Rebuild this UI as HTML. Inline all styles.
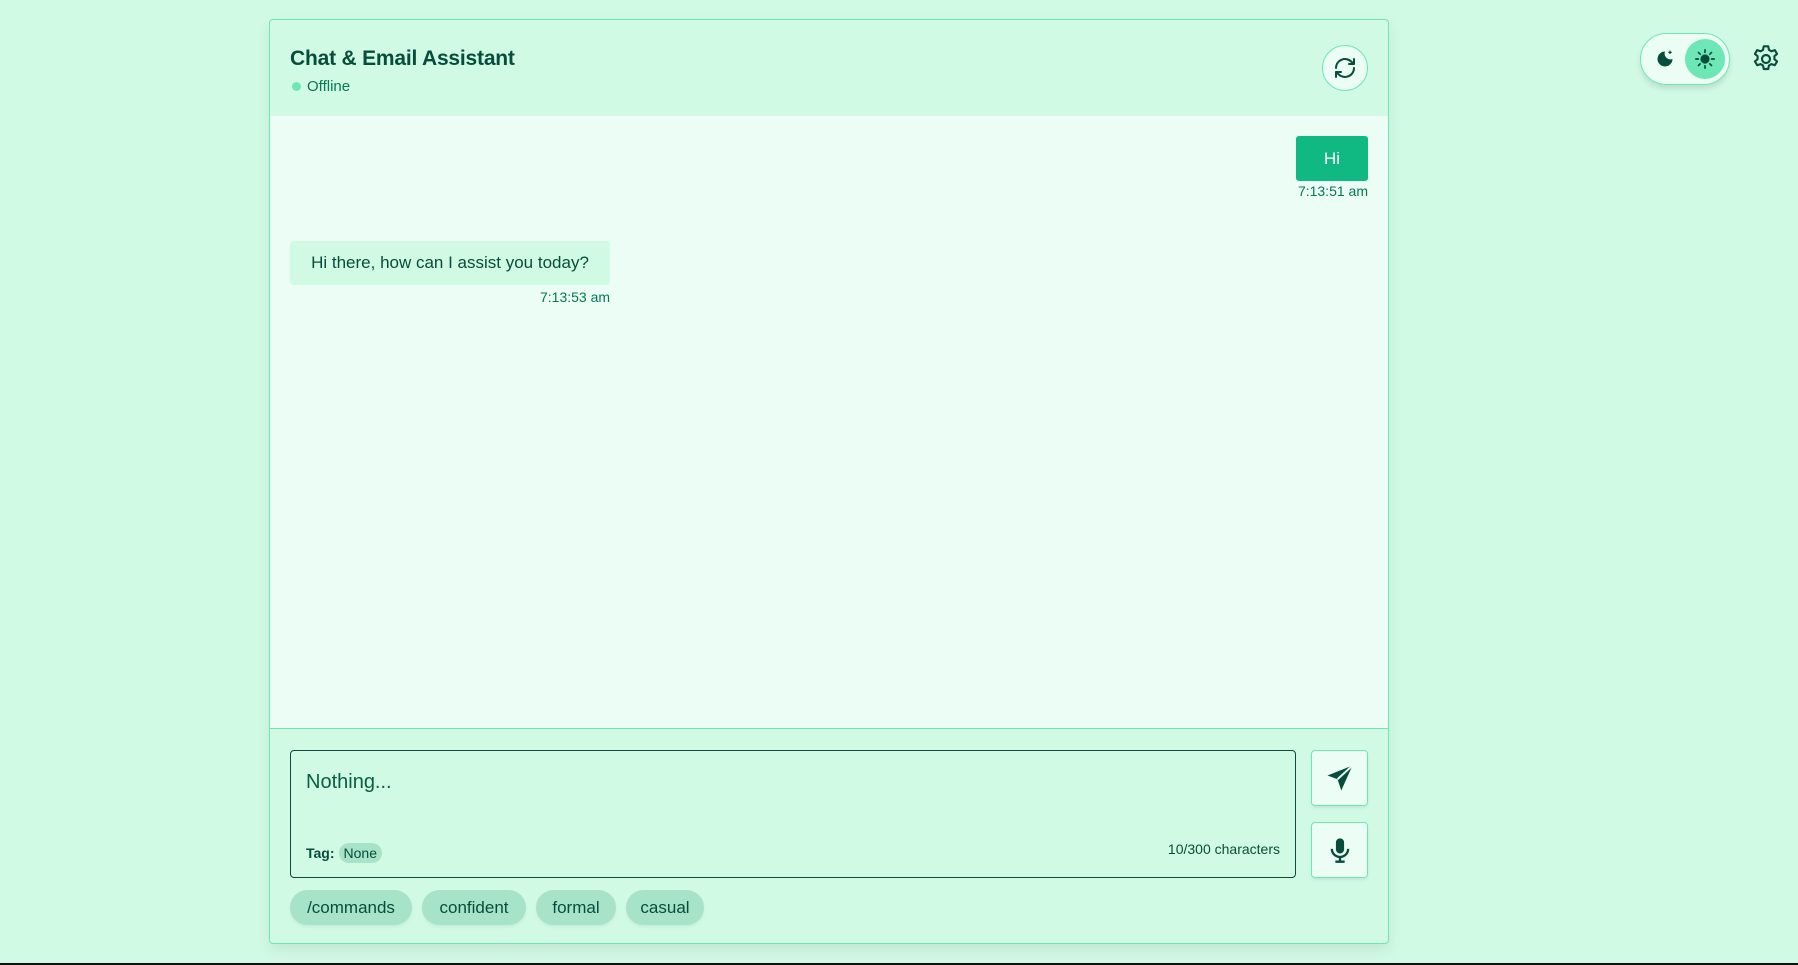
<!DOCTYPE html>
<html><head><meta charset="utf-8"><style>
*{box-sizing:border-box;margin:0;padding:0}
body{width:1798px;height:965px;background:#d1fae5;font-family:"Liberation Sans",sans-serif;color:#064e3b;position:relative;overflow:hidden}
.card{position:absolute;left:269px;top:19px;width:1120px;height:925px;border:1px solid #6ee7b7;border-radius:4px;background:#d1fae5;box-shadow:0 6px 14px rgba(0,0,0,.08);overflow:hidden}
.hdr{height:96px;position:relative}
.title{position:absolute;left:20px;top:27px;font-size:21px;font-weight:bold;color:#064e3b;letter-spacing:-0.2px}
.status{position:absolute;left:22px;top:58px;font-size:15px;color:#047857}
.status i{display:inline-block;width:9px;height:9px;border-radius:50%;background:#6ee7b7;margin-right:6px}
.refresh{position:absolute;left:1052px;top:25px;width:46px;height:46px;border-radius:50%;border:1px solid #6ee7b7;background:#ecfdf5;display:flex;align-items:center;justify-content:center}
.msgs{position:absolute;top:96px;left:0;right:0;height:613px;background:#ecfdf5;border-bottom:1px solid #6ee7b7}
.hi{position:absolute;right:20px;top:20px;width:72px;height:45px;background:#10b981;color:#fff;font-size:17px;border-radius:3px;display:flex;align-items:center;justify-content:center}
.t1{position:absolute;right:20px;top:67px;font-size:14px;color:#047857}
.bot{position:absolute;left:20px;top:125px;width:320px;height:44px;background:#d1fae5;border-radius:4px;font-size:17px;display:flex;align-items:center;justify-content:center}
.t2{position:absolute;left:270px;top:173px;font-size:14px;color:#047857}
.ta{position:absolute;left:20px;top:730px;width:1006px;height:128px;border:1.5px solid #064e3b;border-radius:4px}
.ph{position:absolute;left:15px;top:20px;font-size:20px;color:#065f46}
.tag{position:absolute;left:15px;top:94px;font-size:14px}
.tag b{margin-right:4px}
.tag span{background:#a7e3c9;border-radius:10px;padding:2px 5px}
.cnt{position:absolute;right:15px;top:90px;font-size:14px}
.btn{position:absolute;left:1041px;width:57px;height:56px;border:1px solid #6ee7b7;border-radius:4px;background:#ecfdf5;display:flex;align-items:center;justify-content:center;box-shadow:0 2px 3px rgba(0,0,0,.08)}
.chip{position:absolute;top:870px;height:35px;border-radius:18px;background:#a7e3c9;font-size:17px;display:flex;align-items:center;justify-content:center;box-shadow:0 2px 3px rgba(0,0,0,.06)}
.tog{position:absolute;left:1640px;top:33px;width:90px;height:52px;border-radius:26px;border:1px solid #6ee7b7;background:#ecfdf5;box-shadow:0 4px 6px rgba(0,0,0,.1)}
.sun{position:absolute;left:44px;top:5px;width:40px;height:40px;border-radius:50%;background:#6ee7b7;display:flex;align-items:center;justify-content:center}
</style></head><body>
<div class="card">
 <div class="hdr">
  <div class="title">Chat &amp; Email Assistant</div>
  <div class="status"><i></i>Offline</div>
  <div class="refresh"><svg width="24" height="24" viewBox="0 0 24 24" fill="none" stroke="#064e3b" stroke-width="2" stroke-linecap="round" stroke-linejoin="round"><path d="M3 12a9 9 0 0 1 15.5-6.2L21 8"/><path d="M21 3v5h-5"/><path d="M21 12a9 9 0 0 1-15.5 6.2L3 16"/><path d="M3 21v-5h5"/></svg></div>
 </div>
 <div class="msgs">
  <div class="hi">Hi</div>
  <div class="t1">7:13:51 am</div>
  <div class="bot">Hi there, how can I assist you today?</div>
  <div class="t2">7:13:53 am</div>
 </div>
 <div class="ta">
  <div class="ph">Nothing...</div>
  <div class="tag"><b>Tag:</b><span>None</span></div>
  <div class="cnt">10/300 characters</div>
 </div>
 <div class="btn" style="top:730px"><svg width="30" height="30" viewBox="0 0 24 24"><path d="M22 2L2 10l8 3 3 9z" fill="#064e3b"/><path d="M22 2L10 13" stroke="#ecfdf5" stroke-width="1.5"/></svg></div>
 <div class="btn" style="top:802px"><svg width="28" height="30" viewBox="0 0 24 24"><rect x="8.5" y="2" width="7" height="13" rx="3.5" fill="#064e3b"/><path d="M5 11a7 7 0 0 0 14 0M12 18v4M8 22h8" stroke="#064e3b" stroke-width="2" fill="none"/></svg></div>
 <div class="chip" style="left:20px;width:122px">/commands</div>
 <div class="chip" style="left:152px;width:104px">confident</div>
 <div class="chip" style="left:266px;width:80px">formal</div>
 <div class="chip" style="left:356px;width:78px">casual</div>
</div>
<div class="tog">
 <svg style="position:absolute;left:14px;top:15px" width="20" height="20" viewBox="0 0 24 24"><path d="M12 3a9 9 0 1 0 9 9 7 7 0 0 1-9-9z" fill="#064e3b"/><path d="M18 2v4M16 4h4" stroke="#064e3b" stroke-width="1.5"/></svg>
 <div class="sun"><svg width="20" height="20" viewBox="0 0 24 24" stroke="#064e3b" stroke-width="2" stroke-linecap="round"><circle cx="12" cy="12" r="4.5" fill="#064e3b"/><path d="M12 1v3M12 20v3M1 12h3M20 12h3M4.2 4.2l2 2M17.8 17.8l2 2M4.2 19.8l2-2M17.8 6.2l2-2"/></svg></div>
</div>
<svg style="position:absolute;left:1750px;top:43px" width="32" height="32" viewBox="0 0 24 24" fill="none" stroke="#064e3b" stroke-width="1.6" stroke-linejoin="round"><path d="M10.3 2.5h3.4l.5 2.6 1.9 1.1 2.5-.9 1.7 2.9-2 1.7v2.2l2 1.7-1.7 2.9-2.5-.9-1.9 1.1-.5 2.6h-3.4l-.5-2.6-1.9-1.1-2.5.9-1.7-2.9 2-1.7v-2.2l-2-1.7 1.7-2.9 2.5.9 1.9-1.1z"/><circle cx="12" cy="12" r="3"/></svg>
<div style="position:absolute;left:0;top:963px;width:1798px;height:2px;background:#111"></div>
</body></html>
